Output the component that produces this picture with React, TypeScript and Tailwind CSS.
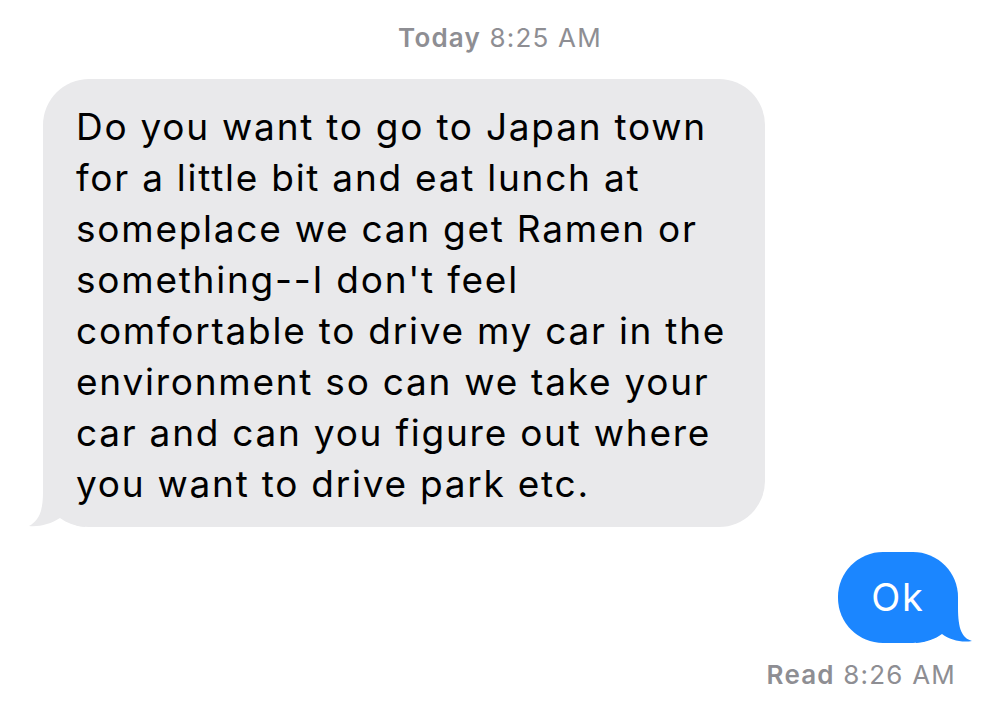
import React from "react";

export default function App() {
  const font = { fontFamily: "Inter, 'Helvetica Neue', Arial, sans-serif" };
  return (
    <div className="w-[1000px] h-[718px] bg-white flex flex-col overflow-hidden" style={font}>
      <div className="pt-[20px] h-[79px] text-center text-[26px] leading-[36px] tracking-[1.2px] text-[#8e8e93]">
        <span className="font-semibold">Today</span> 8:25 AM
      </div>
      <div className="pl-[43px]">
        <div className="relative w-[722px] h-[448px] bg-[#e9e9eb] rounded-[46px] pl-[33px] pt-[22px] text-[37px] leading-[51px] text-black tracking-[1.75px]">
          <svg className="absolute left-[-20px] bottom-0" width="80" height="50" viewBox="0 0 80 50">
            <path d="M20 5 L20 15 C20 36 15 44 6 49 C16 50 28 47 37 41 C44 46 52 49 62 50 L62 5 Z" fill="#e9e9eb" />
          </svg>
          <div className="relative">
            <div>Do you want to go to Japan town</div>
            <div>for a little bit and eat lunch at</div>
            <div>someplace we can get Ramen or</div>
            <div>something--I don't feel</div>
            <div>comfortable to drive my car in the</div>
            <div>environment so can we take your</div>
            <div>car and can you figure out where</div>
            <div>you want to drive park etc.</div>
          </div>
        </div>
      </div>
      <div className="flex justify-end pr-[42px] pt-[25px]">
        <div className="relative w-[120px] h-[91px] bg-[#1b86ff] rounded-[45px] flex items-center justify-center text-white text-[38px] tracking-[1.8px]">
          <svg className="absolute right-[-20px] bottom-0" width="80" height="50" viewBox="0 0 80 50">
            <path d="M60 5 L60 15 C60 36 64 45 74 48 C64 50 52 47 44 41 C37 46 29 49 18 50 L18 5 Z" fill="#1b86ff" />
          </svg>
          <span className="relative">Ok</span>
        </div>
      </div>
      <div className="flex justify-end pr-[44px] pt-[14px] text-[26px] leading-[36px] tracking-[1.2px] text-[#8e8e93]">
        <span className="font-semibold">Read</span>&nbsp;8:26 AM
      </div>
    </div>
  );
}
